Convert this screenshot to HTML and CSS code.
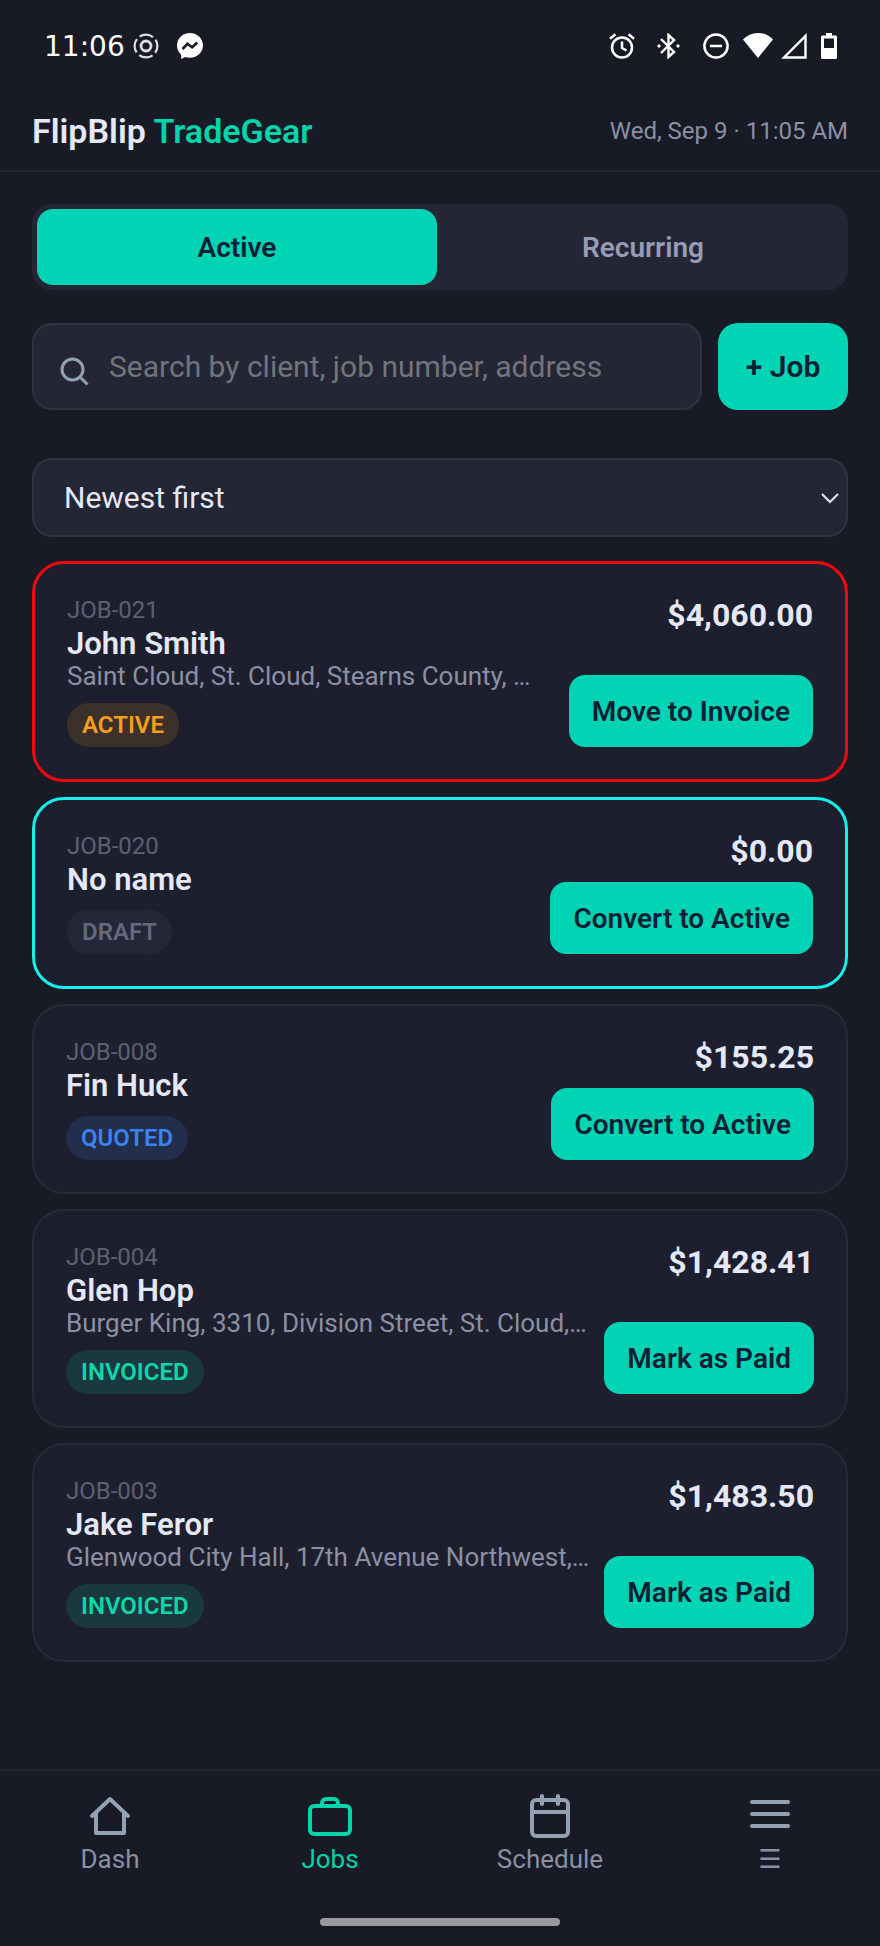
FILE: index.html
```html
<!DOCTYPE html>
<html lang="en">
<head>
    <meta charset="UTF-8">
    <meta name="viewport" content="width=device-width, initial-scale=1.0">
    <title>FlipBlip TradeGear - Jobs</title>
    <link rel="stylesheet" href="styles.css">
</head>
<body>
    <div class="status-bar">
        <span class="status-time">11:06</span>
        <svg class="status-icon" viewBox="0 0 26 26" fill="none" stroke="#dcdde4">
            <circle cx="13" cy="13" r="11.4" stroke-width="2.2" stroke-dasharray="14.3 3.6" stroke-dashoffset="7.1"/>
            <circle cx="13" cy="13" r="5" stroke-width="2.8"/>
        </svg>
        <svg class="status-icon messenger" viewBox="0 0 26 26">
            <path fill="#fff" d="M13 0C5.500 0 0 5.500 0 12.600c0 3.800 1.600 7 4.200 9.200v4.200l4-2c1.500.500 3.100.700 4.800.700 7.500 0 13-5.500 13-12.200S20.500 0 13 0z"/>
            <path fill="none" stroke="#181a26" stroke-width="2.600" d="M5.500 16l5-5.200 4.600 3.400 5.200-4.700"/>
        </svg>
        <div class="status-right">
            <svg class="status-icon" viewBox="0 0 26 26" fill="none" stroke="#fff" stroke-width="2.500">
                <circle cx="13" cy="14.500" r="10"/>
                <path d="M13 8.500v6.500l4.500 2.500M1 5.800l5.400-4.600M25 5.800l-5.400-4.600"/>
            </svg>
            <svg class="status-icon bluetooth" viewBox="0 0 26 26" fill="none" stroke="#fff" stroke-width="2.400">
                <path d="M6 6l13 13-5.500 5V2l5.500 5L6 20"/>
                <circle cx="4" cy="13" r="1.200" fill="#fff" stroke-width="1"/>
                <circle cx="23" cy="13" r="1.200" fill="#fff" stroke-width="1"/>
            </svg>
            <svg class="status-icon dnd" viewBox="0 0 26 26" fill="none" stroke="#fff" stroke-width="2.500">
                <circle cx="13" cy="13" r="11.600"/>
                <path d="M7 13h12"/>
            </svg>
            <svg class="status-wifi" viewBox="0 0 30 26" fill="#fff">
                <path d="M0 6.500C4 2.200 9 0 15 0s11 2.200 15 6.500L15 25z"/>
            </svg>
            <svg class="status-icon signal" viewBox="0 0 26 26" fill="none" stroke="#fff" stroke-width="2.400">
                <path d="M3 24.500L24.500 3v21.500z"/>
            </svg>
            <svg class="status-battery" viewBox="0 0 16 26">
                <path fill="#fff" fill-rule="evenodd" d="M5 0h6v2.500h3.500c.8 0 1.500.7 1.500 1.500v20.500c0 .8-.7 1.500-1.500 1.500h-13C.7 26 0 25.300 0 24.500V4c0-.8.7-1.500 1.500-1.500H5zM3 5.500v9.500h10V5.500z"/>
            </svg>
        </div>
    </div>

    <header class="header">
        <h1 class="brand">FlipBlip <span class="brand-accent">TradeGear</span></h1>
        <span class="date">Wed, Sep 9 · 11:05 AM</span>
    </header>

    <main class="main">
        <div class="tabs">
            <button type="button" class="tab tab-active">Active</button>
            <button type="button" class="tab">Recurring</button>
        </div>

        <div class="search-row">
            <div class="search-box">
                <label for="search" class="search-label" aria-label="Search">
                    <svg class="search-icon" viewBox="0 0 24 24">
                        <circle cx="11" cy="11" r="7"/>
                        <path d="M16 16l5 5"/>
                    </svg>
                </label>
                <input type="text" id="search" class="search-input" placeholder="Search by client, job number, address">
            </div>
            <button type="button" class="btn-add">+ Job</button>
        </div>

        <div class="sort">
            <select id="sort" class="sort-select" aria-label="Sort jobs">
                <option>Newest first</option>
                <option>Oldest first</option>
            </select>
            <svg class="sort-arrow" viewBox="0 0 18 12"><path d="M1 2l8 8 8-8"/></svg>
        </div>

        <div class="job-list">
            <article class="card card-red">
                <div class="card-info">
                    <div class="job-number">JOB-021</div>
                    <h2 class="client">John Smith</h2>
                    <div class="address">Saint Cloud, St. Cloud, Stearns County, …</div>
                    <span class="badge badge-active">ACTIVE</span>
                </div>
                <div class="card-side">
                    <div class="amount">$4,060.00</div>
                    <button type="button" class="btn">Move to Invoice</button>
                </div>
            </article>

            <article class="card card-cyan">
                <div class="card-info">
                    <div class="job-number">JOB-020</div>
                    <h2 class="client">No name</h2>
                    <span class="badge badge-draft">DRAFT</span>
                </div>
                <div class="card-side">
                    <div class="amount">$0.00</div>
                    <button type="button" class="btn">Convert to Active</button>
                </div>
            </article>

            <article class="card">
                <div class="card-info">
                    <div class="job-number">JOB-008</div>
                    <h2 class="client">Fin Huck</h2>
                    <span class="badge badge-quoted">QUOTED</span>
                </div>
                <div class="card-side">
                    <div class="amount">$155.25</div>
                    <button type="button" class="btn">Convert to Active</button>
                </div>
            </article>

            <article class="card">
                <div class="card-info">
                    <div class="job-number">JOB-004</div>
                    <h2 class="client">Glen Hop</h2>
                    <div class="address">Burger King, 3310, Division Street, St. Cloud,…</div>
                    <span class="badge badge-invoiced">INVOICED</span>
                </div>
                <div class="card-side">
                    <div class="amount">$1,428.41</div>
                    <button type="button" class="btn">Mark as Paid</button>
                </div>
            </article>

            <article class="card">
                <div class="card-info">
                    <div class="job-number">JOB-003</div>
                    <h2 class="client">Jake Feror</h2>
                    <div class="address">Glenwood City Hall, 17th Avenue Northwest,…</div>
                    <span class="badge badge-invoiced">INVOICED</span>
                </div>
                <div class="card-side">
                    <div class="amount">$1,483.50</div>
                    <button type="button" class="btn">Mark as Paid</button>
                </div>
            </article>
        </div>
    </main>

    <nav class="nav">
        <div class="nav-items">
            <a href="#" class="nav-item">
                <svg class="nav-icon" viewBox="0 0 24 24"><path d="M3 12l9-8.500 9 8.500M5 10.500v10h14v-10"/></svg>
                Dash
            </a>
            <a href="#" class="nav-item nav-current">
                <svg class="nav-icon" viewBox="0 0 24 24"><rect x="2" y="7" width="20" height="14" rx="2"/><path d="M16 7V5.500a2 2 0 0 0-2-2h-4a2 2 0 0 0-2 2V7"/></svg>
                Jobs
            </a>
            <a href="#" class="nav-item">
                <svg class="nav-icon" viewBox="0 0 24 24"><rect x="3" y="4" width="18" height="18" rx="2"/><path d="M8 2v4M16 2v4M3 10h18"/></svg>
                Schedule
            </a>
            <a href="#" class="nav-item">
                <svg class="nav-icon" viewBox="0 0 24 24"><path d="M3 5h18M3 11h18M3 17h18"/></svg>
                ☰
            </a>
        </div>
        <div class="home-indicator"></div>
    </nav>
</body>
</html>
```

FILE: styles.css
```css
* {
    box-sizing: border-box;
}
body {
    display: flex;
    flex-direction: column;
    min-height: 100vh;
    margin: 0;
    background-color: #181a26;
    color: #e4e8f7;
    font-family: Roboto, "DejaVu Sans", sans-serif;
}
h1, h2 {
    margin: 0;
}
button, input, select {
    font-family: inherit;
}
button {
    border: none;
    cursor: pointer;
}

/* Phone status bar */
.status-bar {
    display: flex;
    align-items: center;
    height: 92px;
    padding: 0 43px 0 44px;
}
.status-time {
    margin-right: 8px;
    color: #fff;
    font-family: "DejaVu Sans", sans-serif;
    font-size: 28px;
}
.status-icon {
    width: 26px;
    height: 26px;
}
.messenger {
    margin-left: 18px;
}
.status-right {
    display: flex;
    align-items: center;
    margin-left: auto;
}
.bluetooth {
    margin-left: 20px;
}
.dnd {
    margin-left: 22px;
}
.status-wifi {
    width: 30px;
    height: 26px;
    margin-left: 14px;
}
.signal {
    margin-left: 8px;
}
.status-battery {
    width: 16px;
    height: 26px;
    margin-left: 14px;
}

.header {
    display: flex;
    align-items: center;
    justify-content: space-between;
    height: 80px;
    padding: 0 32px;
    border-bottom: 2px solid #222431;
}
.brand {
    font-size: 34px;
    font-weight: 600;
}
.brand-accent {
    color: #00d4aa;
}
.date {
    color: #8b90a5;
    font-size: 24px;
}

.main {
    padding: 32px;
}
.tabs {
    display: flex;
    gap: 6px;
    padding: 5px;
    border-radius: 20px;
    background-color: #242635;
}
.tab {
    flex: 1;
    height: 76px;
    border-radius: 16px;
    background: none;
    color: #949db4;
    font-size: 28px;
    font-weight: 600;
}
.tab-active {
    background-color: #00d4b4;
    color: #0b1f35;
}

.search-row {
    display: flex;
    gap: 16px;
    height: 87px;
    margin-top: 33px;
}
.search-box {
    display: flex;
    flex: 1;
    align-items: center;
    gap: 17px;
    padding: 0 22px;
    border: 2px solid #303240;
    border-radius: 20px;
    background-color: #242635;
}
.search-label {
    padding-top: 8px;
}
.search-icon {
    display: block;
    width: 36px;
    height: 36px;
    fill: none;
    stroke: #94a0b4;
    stroke-width: 2;
}
.search-input {
    flex: 1;
    min-width: 0;
    padding: 0;
    border: none;
    outline: none;
    background: none;
    color: #e4e8f7;
    font-size: 30px;
}
.search-input::placeholder {
    color: #72747c;
}
.btn-add {
    width: 130px;
    border-radius: 20px;
    background-color: #00d4b4;
    color: #0b1f35;
    font-size: 30px;
    font-weight: 600;
}

.sort {
    position: relative;
    margin-top: 48px;
}
.sort-select {
    display: block;
    width: 100%;
    height: 79px;
    padding: 0 30px;
    border: 2px solid #303240;
    border-radius: 20px;
    background-color: #242635;
    color: #e4e8f7;
    font-size: 30px;
    appearance: none;
}
.sort-arrow {
    position: absolute;
    top: 34px;
    right: 9px;
    width: 18px;
    height: 12px;
    fill: none;
    stroke: #e4e8f7;
    stroke-width: 2;
    pointer-events: none;
}

.job-list {
    display: flex;
    flex-direction: column;
    gap: 15px;
    margin-top: 24px;
}
.card {
    display: flex;
    justify-content: space-between;
    gap: 10px;
    padding: 32px;
    border: 2px solid #282a38;
    border-radius: 32px;
    background-color: #1e1f2e;
}
.card-red {
    border: 3px solid #ee0a10;
}
.card-cyan {
    border: 3px solid #14f0ec;
}
.card-info {
    min-width: 0;
}
.job-number {
    color: #5c6073;
    font-size: 24px;
    line-height: 29px;
}
.client {
    font-size: 31px;
    font-weight: 600;
    line-height: 37px;
}
.address {
    overflow: hidden;
    color: #8b90a5;
    font-size: 26px;
    line-height: 29px;
    text-overflow: ellipsis;
    white-space: nowrap;
}
.badge {
    display: block;
    width: fit-content;
    margin-top: 12px;
    padding: 0 15px;
    border-radius: 22px;
    font-size: 24px;
    font-weight: 600;
    line-height: 44px;
}
.badge-active {
    background-color: #3c302a;
    color: #f59e1b;
}
.badge-draft {
    background-color: #242737;
    color: #64697c;
}
.badge-quoted {
    background-color: #232d4c;
    color: #3b82f0;
}
.badge-invoiced {
    background-color: #1a383f;
    color: #0fd6a8;
}
.card-side {
    display: flex;
    flex-direction: column;
    flex-shrink: 0;
    align-items: flex-end;
    justify-content: space-between;
}
.amount {
    font-size: 32px;
    font-weight: 700;
    line-height: 38px;
}
.btn {
    height: 72px;
    padding: 0 23px;
    border-radius: 16px;
    background-color: #00d4b4;
    color: #0b1f35;
    font-size: 28px;
    font-weight: 600;
}

.nav {
    margin-top: auto;
    padding-bottom: 20px;
    border-top: 2px solid #222431;
}
.nav-items {
    display: flex;
    padding-top: 21px;
}
.nav-item {
    display: flex;
    flex: 1;
    flex-direction: column;
    align-items: center;
    gap: 4px;
    color: #8b90a5;
    font-size: 26px;
    line-height: 30px;
    text-decoration: none;
}
.nav-icon {
    width: 48px;
    height: 48px;
    fill: none;
    stroke: #94a0b4;
    stroke-width: 2;
    stroke-linecap: round;
    stroke-linejoin: round;
}
.nav-current {
    color: #00d4aa;
}
.nav-current .nav-icon {
    stroke: #00d4aa;
}
.home-indicator {
    width: 240px;
    height: 8px;
    margin: 44px auto 0;
    border-radius: 4px;
    background-color: #989a9f;
}
```
